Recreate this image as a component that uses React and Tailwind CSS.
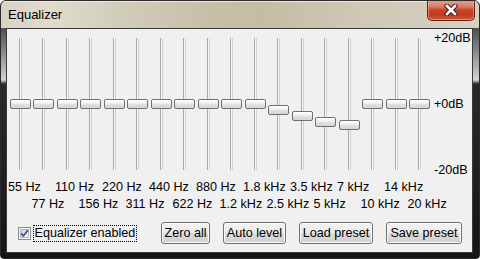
const FREQS = ["55 Hz","77 Hz","110 Hz","156 Hz","220 Hz","311 Hz","440 Hz","622 Hz","880 Hz","1.2 kHz","1.8 kHz","2.5 kHz","3.5 kHz","5 kHz","7 kHz","10 kHz","14 kHz","20 kHz"];
const OFFS = [0,0,0,0,0,0,0,0,0,0,0,6,12,18,21,0,0,0];

function Slider({ off }) {
  return (
    <div className="relative w-[23.5px] h-[132px]">
      <div className="absolute left-[10px] top-0 bottom-0 w-[3px] border-l border-r border-l-[#a9a9a9] border-r-[#d2d2d2] bg-[#f7f7f7]" />
      <div
        className="absolute left-[1px] w-[21px] h-[10px] rounded-[2px] border border-[#707070] bg-[linear-gradient(to_bottom,#ffffff_0%,#f0f0f0_40%,#dedede_60%,#d6d6d6_100%)] shadow-[inset_0_1px_0_#ffffff]"
        style={{ top: 61 + off }}
      />
    </div>
  );
}

function Btn({ w, children }) {
  return (
    <div className={`${w} h-[22px] flex items-center justify-center rounded-[3px] border border-[#707070] bg-[linear-gradient(to_bottom,#f2f2f2_0%,#ebebeb_50%,#dddddd_50%,#cfcfcf_100%)] shadow-[inset_0_0_0_1px_#fbfbfb] text-[12.6px] leading-[16px] whitespace-nowrap`}>
      {children}
    </div>
  );
}

export default function App() {
  const row1 = FREQS.filter((_, i) => i % 2 === 0);
  const row2 = FREQS.filter((_, i) => i % 2 === 1);
  return (
    <div className="w-[480px] h-[259px] bg-white font-['Liberation_Sans',Arial,sans-serif] text-black">
      <div className="w-full h-full flex flex-col border border-[#2b2b2b] rounded-t-[6px] rounded-b-[4px] overflow-hidden bg-[#141414]">
        <div className="h-[27px] shrink-0 flex items-start justify-between bg-[linear-gradient(to_right,#d8d3c4_0%,#e0dbcd_10%,#d2ccba_25%,#c6bea7_45%,#c4bca4_55%,#cfc8b6_75%,#d6d0c1_100%)] shadow-[inset_0_1px_0_#eeeae0]">
          <span className="mt-[6px] ml-[7px] text-[13px] leading-[16px] text-black">Equalizer</span>
          <div className="-mt-px mr-[4px] w-[48px] h-[21px] rounded-b-[5px] border border-[#5e2417] border-t-0 bg-[linear-gradient(to_bottom,#e6a592_0%,#d77a63_35%,#c64327_50%,#c2391e_75%,#d8593b_100%)] shadow-[inset_0_0_0_1px_rgba(255,200,180,0.45)] flex items-center justify-center">
            <svg width="14" height="12" viewBox="0 0 14 12">
              <path d="M3 2 L11 10 M11 2 L3 10" stroke="#40201a" strokeWidth="4.6" strokeLinecap="square" fill="none" />
              <path d="M3 2 L11 10 M11 2 L3 10" stroke="#ffffff" strokeWidth="2.6" strokeLinecap="square" fill="none" />
            </svg>
          </div>
        </div>
        <div className="flex-1 flex pl-[5px] pr-[6px] pb-[5px] bg-[linear-gradient(to_bottom,#4e4e4e_0px,#8c8c8c_25px,#d4d4d4_52px,#2a2a2a_56px,#151515_100%)]">
          <div className="flex-1 flex flex-col border border-[#3a3a3a] bg-[#f0f0f0]">
            <div className="flex pt-[9px] pl-[1.5px]">
              <div className="flex">
                {OFFS.map((o, i) => (
                  <Slider key={i} off={o} />
                ))}
              </div>
              <div className="ml-[2.5px] -mt-[7px] -mb-[7px] h-[146px] flex flex-col justify-between text-[12.6px] leading-[14px] whitespace-nowrap">
                <span>+20dB</span>
                <span>+0dB</span>
                <span>-20dB</span>
              </div>
            </div>
            <div className="mt-[8.5px] pl-[1px] text-[12.6px] leading-[17px] whitespace-nowrap">
              <div className="flex">
                {row1.map((f) => (
                  <span key={f} className="w-[47px] shrink-0">{f}</span>
                ))}
              </div>
              <div className="flex pl-[23.5px]">
                {row2.map((f) => (
                  <span key={f} className="w-[47px] shrink-0">{f}</span>
                ))}
              </div>
            </div>
            <div className="mt-[9.5px] h-[22px] flex items-center pr-[10px]">
              <div className="ml-[11px] flex items-center">
                <svg width="13" height="13" viewBox="0 0 13 13">
                  <defs>
                    <linearGradient id="cbg" x1="0" y1="0" x2="1" y2="1">
                      <stop offset="0" stopColor="#c6ccd6" />
                      <stop offset="1" stopColor="#f6f7f9" />
                    </linearGradient>
                  </defs>
                  <rect x="0.5" y="0.5" width="12" height="12" fill="#f5f5f5" stroke="#8e8f8f" />
                  <rect x="2.5" y="2.5" width="8" height="8" fill="url(#cbg)" stroke="#b3b8c2" />
                  <path d="M3.2 6.4 L5.4 9 L9.8 3.2" stroke="#3b4f8f" strokeWidth="1.7" fill="none" />
                </svg>
                <span className="ml-[2px] border border-dotted border-black px-[0.5px] text-[12.6px] leading-[15px] whitespace-nowrap">Equalizer enabled</span>
              </div>
              <div className="ml-auto flex gap-[13px]">
                <Btn w="w-[49px]">Zero all</Btn>
                <Btn w="w-[63px]">Auto level</Btn>
                <Btn w="w-[74px]">Load preset</Btn>
                <Btn w="w-[76px]">Save preset</Btn>
              </div>
            </div>
          </div>
        </div>
      </div>
    </div>
  );
}
